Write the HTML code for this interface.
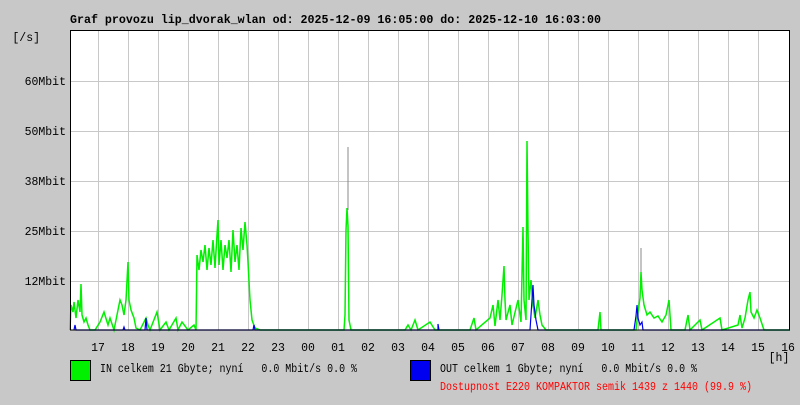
<!DOCTYPE html>
<html><head><meta charset="utf-8"><style>
body{margin:0;background:#c8c8c8;width:800px;height:400px;overflow:hidden;font-family:"Liberation Mono",monospace;}
</style></head><body>
<svg width="800" height="400" xmlns="http://www.w3.org/2000/svg" font-family="Liberation Mono, monospace" font-size="11.5">
<rect width="800" height="400" fill="#c8c8c8"/>
<text x="70" y="23" font-weight="bold" font-size="11.5" fill="#000" textLength="531" lengthAdjust="spacingAndGlyphs">Graf provozu lip_dvorak_wlan od: 2025-12-09 16:05:00 do: 2025-12-10 16:03:00</text>
<rect x="70" y="30" width="720" height="300" fill="#fff"/>
<g stroke="#c8c8c8" stroke-width="1">
<path d="M98.5 30V330M128.5 30V330M158.5 30V330M188.5 30V330M218.5 30V330M248.5 30V330M278.5 30V330M308.5 30V330M338.5 30V330M368.5 30V330M398.5 30V330M428.5 30V330M458.5 30V330M488.5 30V330M518.5 30V330M548.5 30V330M578.5 30V330M608.5 30V330M638.5 30V330M668.5 30V330M698.5 30V330M728.5 30V330M758.5 30V330"/>
<path d="M70 81.5H790M70 131.5H790M70 181.5H790M70 231.5H790M70 281.5H790"/>
</g>
<g fill="none" stroke="#00f000" stroke-width="1.5">
<polyline points="70,330 71,305 73,312 74,302 76,318 78,300 80,312 81,284 82,315 84,322 86,318 88,325 90,330 95,330 100,322 104,312 108,325 110,318 114,330 118,310 120,300 122,305 124,315 126,300 128,262 129,300 131,310 134,318 136,328 140,330 146,318 148,325 150,330 157,312 160,330 166,322 169,330 176,318 178,330 182,322 188,330 194,325 196,330 197,255 199,270 201,250 203,262 205,245 207,270 209,248 211,265 213,240 215,268 217,235 218,220 219,265 221,240 223,270 225,245 227,258 229,240 231,272 233,230 235,262 237,245 239,270 241,228 243,250 245,222 247,245 248,262 250,300 252,320 255,328 260,330 300,330 344,330 345,315 346,230 347,208 348,226 349,320 351,330 405,330 408,325 411,330 415,320 418,330 430,322 435,330 470,330 474,318 476,330 490,318 493,305 495,326 498,300 500,320 502,295 504,266 505,300 506,320 510,305 512,325 518,300 521,322 523,227 524,300 526,320 527,141 528,230 529,300 531,280 533,305 535,318 538,300 540,315 542,325 546,330 598,330 600,312 601,330 636,330 638,312 640,298 641,272 642,290 644,305 647,315 650,312 654,318 658,316 662,322 666,315 669,300 671,330 685,330 688,315 690,330 700,320 702,330 720,318 722,330 738,325 740,315 742,328 745,318 748,300 750,292 751,312 754,318 757,310 760,318 762,324 764,330 790,330"/>
</g>
<line x1="348" y1="147" x2="348" y2="210" stroke="#888" stroke-width="1"/>
<line x1="641" y1="248" x2="641" y2="272" stroke="#888" stroke-width="1"/>
<g fill="none" stroke="#0000f0" stroke-width="1.2">
<polyline points="74,330 75,325 76,330 123,330 124,327 125,330 145,330 146,318 147,330 196,330 253,330 254,325 255,330 438,330 438,324 439,330 530,330 532,300 533,285 534,305 536,320 538,330 634,330 636,316 637,305 638,318 640,325 642,322 643,330 790,330"/>
</g>
<rect x="70.5" y="30.5" width="719" height="299.5" fill="none" stroke="#000" stroke-width="1"/>
<g fill="#000" text-anchor="end">
<text x="40" y="41">[/s]</text>
<text x="66" y="85">60Mbit</text>
<text x="66" y="135">50Mbit</text>
<text x="66" y="185">38Mbit</text>
<text x="66" y="235">25Mbit</text>
<text x="66" y="285">12Mbit</text>
</g>
<g fill="#000" text-anchor="middle">
<text x="98" y="351">17</text><text x="128" y="351">18</text><text x="158" y="351">19</text><text x="188" y="351">20</text><text x="218" y="351">21</text><text x="248" y="351">22</text><text x="278" y="351">23</text><text x="308" y="351">00</text><text x="338" y="351">01</text><text x="368" y="351">02</text><text x="398" y="351">03</text><text x="428" y="351">04</text><text x="458" y="351">05</text><text x="488" y="351">06</text><text x="518" y="351">07</text><text x="548" y="351">08</text><text x="578" y="351">09</text><text x="608" y="351">10</text><text x="638" y="351">11</text><text x="668" y="351">12</text><text x="698" y="351">13</text><text x="728" y="351">14</text><text x="758" y="351">15</text><text x="788" y="351">16</text>
<text x="779" y="361">[h]</text>
</g>
<rect x="70.5" y="360.5" width="20" height="20" fill="#00f000" stroke="#000"/>
<text x="100" y="372" fill="#000" xml:space="preserve" textLength="257" lengthAdjust="spacingAndGlyphs">IN celkem 21 Gbyte; nyní   0.0 Mbit/s 0.0 %</text>
<rect x="410.5" y="360.5" width="20" height="20" fill="#0000f0" stroke="#000"/>
<text x="440" y="372" fill="#000" xml:space="preserve" textLength="257" lengthAdjust="spacingAndGlyphs">OUT celkem 1 Gbyte; nyní   0.0 Mbit/s 0.0 %</text>
<text x="440" y="390" fill="#f00" textLength="312" lengthAdjust="spacingAndGlyphs">Dostupnost E220 KOMPAKTOR semik 1439 z 1440 (99.9 %)</text>
</svg>
</body></html>
